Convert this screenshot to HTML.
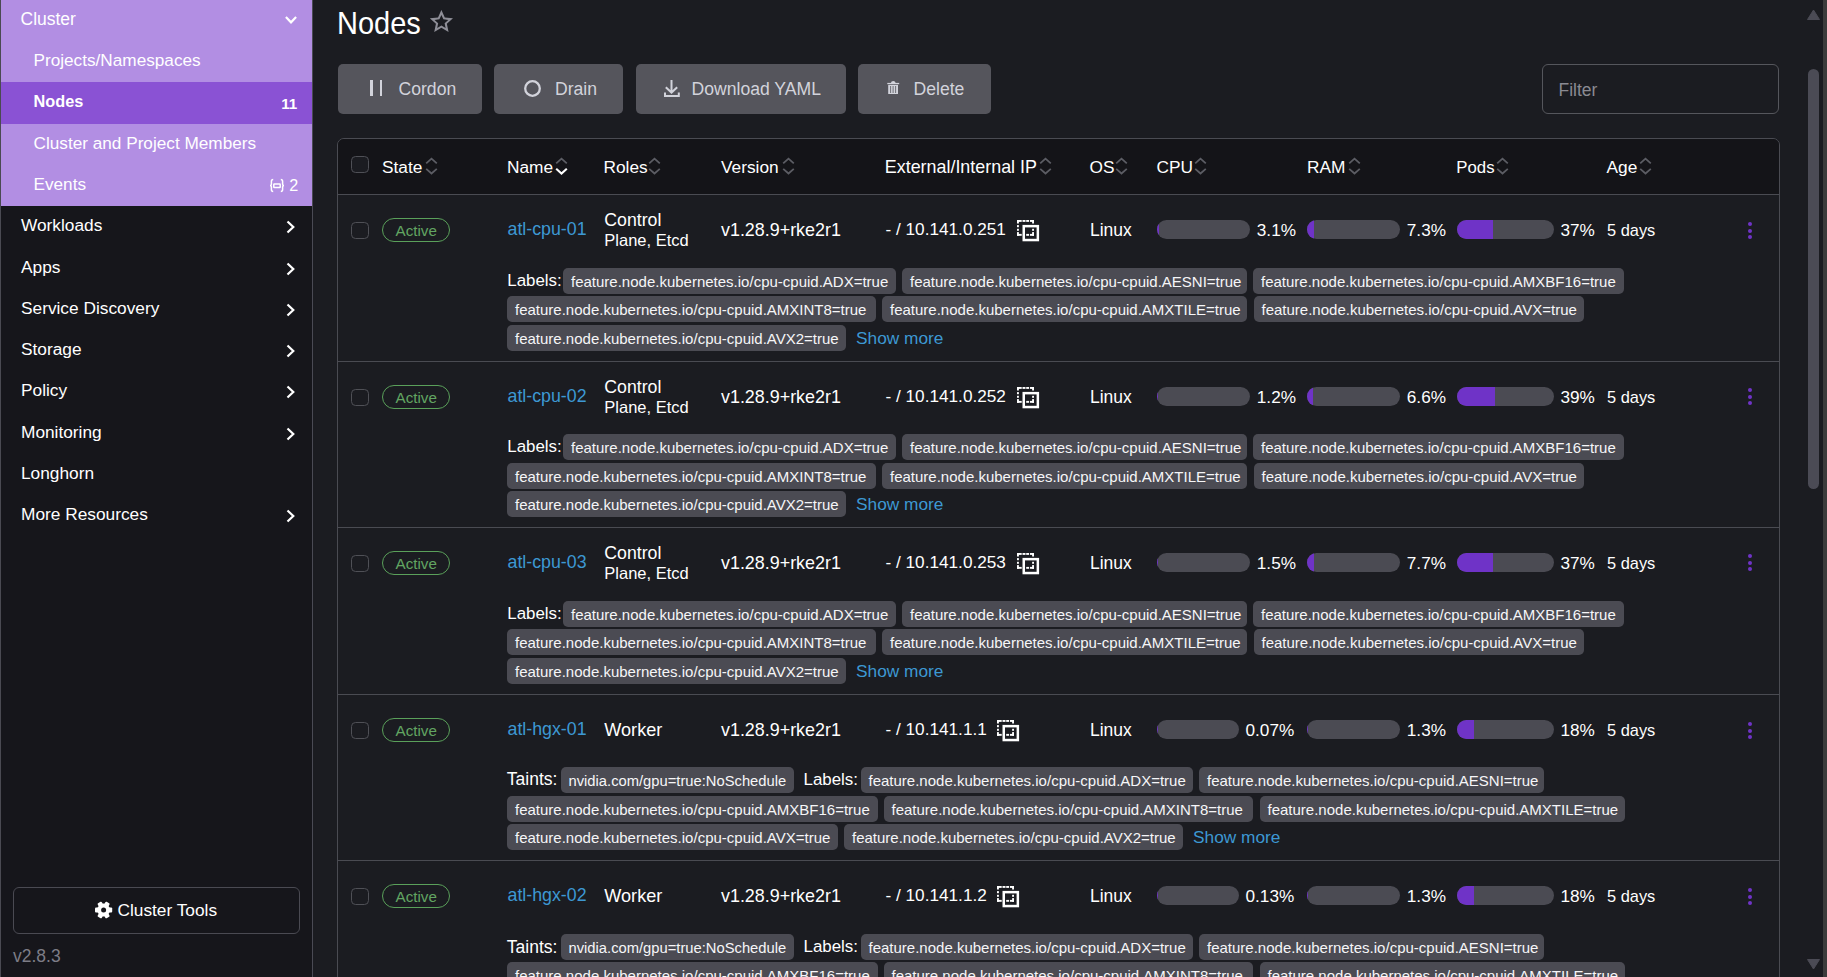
<!DOCTYPE html>
<html><head><meta charset="utf-8"><title>Nodes</title>
<style>
html,body{margin:0;padding:0;width:1827px;height:977px;overflow:hidden;background:#1b1c21;font-family:"Liberation Sans",sans-serif;}
.t{position:absolute;white-space:nowrap;}
.b{position:absolute;display:block;}
.chip{position:absolute;height:25.6px;line-height:28.4px;background:#4b4b53;border-radius:5px;color:#f6f6f8;font-size:15px;padding-left:8px;box-sizing:border-box;white-space:nowrap;overflow:hidden;}
.bar{position:absolute;height:19px;background:#4b4b53;border-radius:10px;overflow:hidden;}
.bar i{display:block;height:100%;background:#6f33c7;}
</style></head><body>
<div class="b" style="left:0px;top:0px;width:312px;height:977px;background:#16161b"></div>
<div class="b" style="left:0px;top:0px;width:312px;height:206px;background:#b28ee3"></div>
<div class="b" style="left:0px;top:82px;width:312px;height:41.5px;background:#8a52d4"></div>
<div class="b" style="left:0px;top:0px;width:1px;height:977px;background:#4a4a52"></div>
<div class="b" style="left:312px;top:0px;width:1px;height:977px;background:#4a4a54"></div>
<div class="t" style="left:20.5px;top:8.04px;font-size:17.5px;line-height:23px;color:#ffffff;font-weight:normal;">Cluster</div>
<svg class="b" style="left:284px;top:14px" width="14" height="12" viewBox="0 0 14 12"><path d="M1.9 3 L7 8.3 L12.1 3" fill="none" stroke="#fff" stroke-width="2.2"/></svg>
<div class="t" style="left:33.5px;top:49.34px;font-size:17.2px;line-height:22px;color:#ffffff;font-weight:normal;">Projects/Namespaces</div>
<div class="t" style="left:33.5px;top:91.45px;font-size:16.3px;line-height:21px;color:#ffffff;font-weight:bold;">Nodes</div>
<div class="t" style="left:33.5px;top:131.84px;font-size:17.2px;line-height:22px;color:#ffffff;font-weight:normal;">Cluster and Project Members</div>
<div class="t" style="left:33.5px;top:173.04px;font-size:17.2px;line-height:22px;color:#ffffff;font-weight:normal;">Events</div>
<div class="t" style="left:281.2px;top:94.33px;font-size:15.2px;line-height:20px;color:#ffffff;font-weight:bold;">11</div>
<svg class="b" style="left:268px;top:177px" width="18" height="17" viewBox="0 0 18 17"><path d="M5.2 2.6 Q3.4 2.6 3.4 4.6 L3.4 7.2 Q3.4 8.5 2 8.5 Q3.4 8.5 3.4 9.8 L3.4 12.6 Q3.4 14.6 5.2 14.6 M12.8 2.6 Q14.6 2.6 14.6 4.6 L14.6 7.2 Q14.6 8.5 16 8.5 Q14.6 8.5 14.6 9.8 L14.6 12.6 Q14.6 14.6 12.8 14.6" fill="none" stroke="#fff" stroke-width="1.5"/><rect x="5.8" y="6.9" width="6.4" height="3.6" rx="0.6" fill="none" stroke="#fff" stroke-width="1.5"/></svg>
<div class="t" style="left:289.3px;top:175.09px;font-size:16.2px;line-height:21px;color:#ffffff;font-weight:normal;">2</div>
<div class="t" style="left:21px;top:214.31px;font-size:17.3px;line-height:22px;color:#ffffff;font-weight:normal;">Workloads</div>
<svg class="b" style="left:285px;top:220.3px" width="10" height="14" viewBox="0 0 10 14"><path d="M2.5 1.5 L8.3 7 L2.5 12.5" fill="none" stroke="#fff" stroke-width="2.2"/></svg>
<div class="t" style="left:21px;top:255.56px;font-size:17.3px;line-height:22px;color:#ffffff;font-weight:normal;">Apps</div>
<svg class="b" style="left:285px;top:261.55px" width="10" height="14" viewBox="0 0 10 14"><path d="M2.5 1.5 L8.3 7 L2.5 12.5" fill="none" stroke="#fff" stroke-width="2.2"/></svg>
<div class="t" style="left:21px;top:296.81px;font-size:17.3px;line-height:22px;color:#ffffff;font-weight:normal;">Service Discovery</div>
<svg class="b" style="left:285px;top:302.8px" width="10" height="14" viewBox="0 0 10 14"><path d="M2.5 1.5 L8.3 7 L2.5 12.5" fill="none" stroke="#fff" stroke-width="2.2"/></svg>
<div class="t" style="left:21px;top:338.06px;font-size:17.3px;line-height:22px;color:#ffffff;font-weight:normal;">Storage</div>
<svg class="b" style="left:285px;top:344.05px" width="10" height="14" viewBox="0 0 10 14"><path d="M2.5 1.5 L8.3 7 L2.5 12.5" fill="none" stroke="#fff" stroke-width="2.2"/></svg>
<div class="t" style="left:21px;top:379.31px;font-size:17.3px;line-height:22px;color:#ffffff;font-weight:normal;">Policy</div>
<svg class="b" style="left:285px;top:385.3px" width="10" height="14" viewBox="0 0 10 14"><path d="M2.5 1.5 L8.3 7 L2.5 12.5" fill="none" stroke="#fff" stroke-width="2.2"/></svg>
<div class="t" style="left:21px;top:420.56px;font-size:17.3px;line-height:22px;color:#ffffff;font-weight:normal;">Monitoring</div>
<svg class="b" style="left:285px;top:426.55px" width="10" height="14" viewBox="0 0 10 14"><path d="M2.5 1.5 L8.3 7 L2.5 12.5" fill="none" stroke="#fff" stroke-width="2.2"/></svg>
<div class="t" style="left:21px;top:461.81px;font-size:17.3px;line-height:22px;color:#ffffff;font-weight:normal;">Longhorn</div>
<div class="t" style="left:21px;top:503.06px;font-size:17.3px;line-height:22px;color:#ffffff;font-weight:normal;">More Resources</div>
<svg class="b" style="left:285px;top:509.04999999999995px" width="10" height="14" viewBox="0 0 10 14"><path d="M2.5 1.5 L8.3 7 L2.5 12.5" fill="none" stroke="#fff" stroke-width="2.2"/></svg>
<div class="b" style="left:13px;top:887px;width:287px;height:46.5px;border:1px solid #4a4a52;border-radius:6px;box-sizing:border-box"></div>
<svg class="b" style="left:94px;top:901px" width="19" height="19" viewBox="0 0 19 19"><g transform="translate(9.6,9)" fill="#fff"><circle r="6.4"/><rect x="-2.4" y="-8.6" width="4.8" height="5" rx="1" transform="rotate(30)"/><rect x="-2.4" y="-8.6" width="4.8" height="5" rx="1" transform="rotate(90)"/><rect x="-2.4" y="-8.6" width="4.8" height="5" rx="1" transform="rotate(150)"/><rect x="-2.4" y="-8.6" width="4.8" height="5" rx="1" transform="rotate(210)"/><rect x="-2.4" y="-8.6" width="4.8" height="5" rx="1" transform="rotate(270)"/><rect x="-2.4" y="-8.6" width="4.8" height="5" rx="1" transform="rotate(330)"/></g><circle cx="9.6" cy="9" r="2.5" fill="#16161b"/></svg>
<div class="t" style="left:117.5px;top:899.01px;font-size:17.3px;line-height:22px;color:#ffffff;font-weight:normal;">Cluster Tools</div>
<div class="t" style="left:13px;top:944.94px;font-size:17.5px;line-height:23px;color:#7d7d86;font-weight:normal;">v2.8.3</div>
<div class="t" style="left:337.3px;top:2.59px;font-size:31.5px;line-height:41px;color:#ffffff;font-weight:normal;transform:scaleX(0.92);transform-origin:0 0;">Nodes</div>
<svg class="b" style="left:430px;top:10px" width="23" height="25" viewBox="0 0 23 25"><path d="M11.40 -0.10 L14.77 7.46 L23.00 8.33 L16.85 13.87 L18.57 21.97 L11.40 17.83 L4.23 21.97 L5.95 13.87 L-0.20 8.33 L8.03 7.46 Z M11.40 4.90 L13.39 9.36 L18.25 9.88 L14.62 13.15 L15.63 17.92 L11.40 15.48 L7.17 17.92 L8.18 13.15 L4.55 9.88 L9.41 9.36 Z" fill="#8e8e97" fill-rule="evenodd"/></svg>
<div class="b" style="left:338px;top:64px;width:144px;height:50px;background:#55555c;border-radius:5px"></div>
<div class="t" style="left:398.5px;top:77.70px;font-size:17.6px;line-height:23px;color:#d2d3db;font-weight:normal;">Cordon</div>
<div class="b" style="left:494px;top:64px;width:129px;height:50px;background:#55555c;border-radius:5px"></div>
<div class="t" style="left:555px;top:77.70px;font-size:17.6px;line-height:23px;color:#d2d3db;font-weight:normal;">Drain</div>
<div class="b" style="left:636px;top:64px;width:210px;height:50px;background:#55555c;border-radius:5px"></div>
<div class="t" style="left:691.5px;top:77.70px;font-size:17.6px;line-height:23px;color:#d2d3db;font-weight:normal;">Download YAML</div>
<div class="b" style="left:858px;top:64px;width:133px;height:50px;background:#55555c;border-radius:5px"></div>
<div class="t" style="left:913.5px;top:77.70px;font-size:17.6px;line-height:23px;color:#d2d3db;font-weight:normal;">Delete</div>
<div class="b" style="left:370px;top:80px;width:2.5px;height:16px;background:#d2d3db"></div>
<div class="b" style="left:379.5px;top:80px;width:2.5px;height:16px;background:#d2d3db"></div>
<svg class="b" style="left:523px;top:79px" width="19" height="19" viewBox="0 0 19 19"><circle cx="9.5" cy="9.5" r="7.3" fill="none" stroke="#d2d3db" stroke-width="2.3"/></svg>
<svg class="b" style="left:662px;top:78px" width="18" height="20" viewBox="0 0 18 20"><path d="M9.5 1.9 V14 M3.8 9.3 L9.5 14.6 L15.2 9.3 M3 14.6 V18 H16.8 V14.6" fill="none" stroke="#d2d3db" stroke-width="2"/></svg>
<svg class="b" style="left:886px;top:80px" width="14" height="16" viewBox="0 0 14 16"><rect x="1.3" y="2.9" width="11.9" height="1.3" fill="#d2d3db"/><path d="M4.9 2.9 Q5.2 0.9 7.25 0.9 Q9.3 0.9 9.6 2.9 Z" fill="#d2d3db"/><rect x="2.2" y="4.9" width="9.8" height="9.1" fill="#d2d3db"/><path d="M4.6 6 V13 M7.1 6 V13 M9.6 6 V13" stroke="#55555c" stroke-width="0.8"/></svg>
<div class="b" style="left:1542px;top:64px;width:237px;height:50px;border:1px solid #55565c;border-radius:6px;box-sizing:border-box"></div>
<div class="t" style="left:1558.5px;top:78.94px;font-size:17.5px;line-height:23px;color:#8a8a92;font-weight:normal;">Filter</div>
<div class="b" style="left:1823px;top:0px;width:4px;height:977px;background:#3c3c3c"></div>
<div class="b" style="left:1808px;top:68.5px;width:11px;height:420px;background:#4b4b55;border-radius:6px"></div>
<svg class="b" style="left:1807px;top:9px" width="13" height="11" viewBox="0 0 13 11"><path d="M6.5 1 L12.5 10.5 H0.5 Z" fill="#4b4b55" stroke="#4b4b55" stroke-linejoin="round" stroke-width="1"/></svg>
<svg class="b" style="left:1807px;top:959px" width="13" height="11" viewBox="0 0 13 11"><path d="M6.5 10 L12.5 0.5 H0.5 Z" fill="#4b4b55" stroke="#4b4b55" stroke-linejoin="round" stroke-width="1"/></svg>
<div class="b" style="left:337px;top:138px;width:1443px;height:900px;border:1px solid #4a4b52;border-radius:7px;box-sizing:border-box"></div>
<div class="b" style="left:338px;top:139px;width:1441px;height:55px;background:#141418;border-radius:6px 6px 0 0"></div>
<div class="b" style="left:337px;top:194px;width:1443px;height:1px;background:#4a4b52"></div>
<div class="b" style="left:351px;top:156px;width:18px;height:17px;background:#1b1c21;border:1.3px solid #4f5056;border-radius:4.5px;box-sizing:border-box"></div>
<div class="t" style="left:382px;top:156.31px;font-size:17.3px;line-height:22px;color:#ffffff;font-weight:normal;">State</div>
<svg class="b" style="left:424.8px;top:157px" width="13" height="19" viewBox="0 0 13 19"><path d="M1.2 6.4 L6.5 1.6 L11.8 6.4" fill="none" stroke="#5c5d64" stroke-width="1.8"/><path d="M1.2 11.8 L6.5 16.5 L11.8 11.8" fill="none" stroke="#5c5d64" stroke-width="1.8"/></svg>
<div class="t" style="left:507px;top:156.31px;font-size:17.3px;line-height:22px;color:#ffffff;font-weight:normal;">Name</div>
<svg class="b" style="left:554.8px;top:157px" width="13" height="19" viewBox="0 0 13 19"><path d="M1.2 6.4 L6.5 1.6 L11.8 6.4" fill="none" stroke="#5c5d64" stroke-width="1.8"/><path d="M1.2 11.8 L6.5 16.5 L11.8 11.8" fill="none" stroke="#ffffff" stroke-width="2.1"/></svg>
<div class="t" style="left:603.5px;top:156.31px;font-size:17.3px;line-height:22px;color:#ffffff;font-weight:normal;">Roles</div>
<svg class="b" style="left:648.3px;top:157px" width="13" height="19" viewBox="0 0 13 19"><path d="M1.2 6.4 L6.5 1.6 L11.8 6.4" fill="none" stroke="#5c5d64" stroke-width="1.8"/><path d="M1.2 11.8 L6.5 16.5 L11.8 11.8" fill="none" stroke="#5c5d64" stroke-width="1.8"/></svg>
<div class="t" style="left:721px;top:156.31px;font-size:17.3px;line-height:22px;color:#ffffff;font-weight:normal;">Version</div>
<svg class="b" style="left:782.3px;top:157px" width="13" height="19" viewBox="0 0 13 19"><path d="M1.2 6.4 L6.5 1.6 L11.8 6.4" fill="none" stroke="#5c5d64" stroke-width="1.8"/><path d="M1.2 11.8 L6.5 16.5 L11.8 11.8" fill="none" stroke="#5c5d64" stroke-width="1.8"/></svg>
<div class="t" style="left:884.8px;top:155.60px;font-size:17.9px;line-height:23px;color:#ffffff;font-weight:normal;">External/Internal IP</div>
<svg class="b" style="left:1038.8px;top:157px" width="13" height="19" viewBox="0 0 13 19"><path d="M1.2 6.4 L6.5 1.6 L11.8 6.4" fill="none" stroke="#5c5d64" stroke-width="1.8"/><path d="M1.2 11.8 L6.5 16.5 L11.8 11.8" fill="none" stroke="#5c5d64" stroke-width="1.8"/></svg>
<div class="t" style="left:1089.5px;top:156.31px;font-size:17.3px;line-height:22px;color:#ffffff;font-weight:normal;">OS</div>
<svg class="b" style="left:1114.8px;top:157px" width="13" height="19" viewBox="0 0 13 19"><path d="M1.2 6.4 L6.5 1.6 L11.8 6.4" fill="none" stroke="#5c5d64" stroke-width="1.8"/><path d="M1.2 11.8 L6.5 16.5 L11.8 11.8" fill="none" stroke="#5c5d64" stroke-width="1.8"/></svg>
<div class="t" style="left:1156.5px;top:156.31px;font-size:17.3px;line-height:22px;color:#ffffff;font-weight:normal;">CPU</div>
<svg class="b" style="left:1194.3px;top:157px" width="13" height="19" viewBox="0 0 13 19"><path d="M1.2 6.4 L6.5 1.6 L11.8 6.4" fill="none" stroke="#5c5d64" stroke-width="1.8"/><path d="M1.2 11.8 L6.5 16.5 L11.8 11.8" fill="none" stroke="#5c5d64" stroke-width="1.8"/></svg>
<div class="t" style="left:1307px;top:156.31px;font-size:17.3px;line-height:22px;color:#ffffff;font-weight:normal;">RAM</div>
<svg class="b" style="left:1347.8px;top:157px" width="13" height="19" viewBox="0 0 13 19"><path d="M1.2 6.4 L6.5 1.6 L11.8 6.4" fill="none" stroke="#5c5d64" stroke-width="1.8"/><path d="M1.2 11.8 L6.5 16.5 L11.8 11.8" fill="none" stroke="#5c5d64" stroke-width="1.8"/></svg>
<div class="t" style="left:1456.3px;top:157.28px;font-size:16.8px;line-height:22px;color:#ffffff;font-weight:normal;">Pods</div>
<svg class="b" style="left:1495.8px;top:157px" width="13" height="19" viewBox="0 0 13 19"><path d="M1.2 6.4 L6.5 1.6 L11.8 6.4" fill="none" stroke="#5c5d64" stroke-width="1.8"/><path d="M1.2 11.8 L6.5 16.5 L11.8 11.8" fill="none" stroke="#5c5d64" stroke-width="1.8"/></svg>
<div class="t" style="left:1606.5px;top:156.31px;font-size:17.3px;line-height:22px;color:#ffffff;font-weight:normal;">Age</div>
<svg class="b" style="left:1638.8px;top:157px" width="13" height="19" viewBox="0 0 13 19"><path d="M1.2 6.4 L6.5 1.6 L11.8 6.4" fill="none" stroke="#5c5d64" stroke-width="1.8"/><path d="M1.2 11.8 L6.5 16.5 L11.8 11.8" fill="none" stroke="#5c5d64" stroke-width="1.8"/></svg>
<div class="b" style="left:351px;top:222px;width:18px;height:17px;background:#1b1c21;border:1.3px solid #4f5056;border-radius:4.5px;box-sizing:border-box"></div>
<div class="b" style="left:382px;top:218px;width:68px;height:23.5px;border:1.3px solid #5aa05a;border-radius:12px;box-sizing:border-box"></div>
<div class="t" style="left:395.5px;top:221.43px;font-size:15.2px;line-height:20px;color:#62a562;font-weight:normal;">Active</div>
<div class="t" style="left:507.5px;top:218.33px;font-size:17.8px;line-height:23px;color:#3d98d3;font-weight:normal;">atl-cpu-01</div>
<div class="t" style="left:604.3px;top:208.87px;font-size:17.7px;line-height:23px;color:#ffffff;font-weight:normal;">Control</div>
<div class="t" style="left:604.3px;top:229.78px;font-size:16.5px;line-height:21px;color:#ffffff;font-weight:normal;">Plane, Etcd</div>
<div class="t" style="left:721px;top:218.80px;font-size:17.9px;line-height:23px;color:#ffffff;font-weight:normal;">v1.28.9+rke2r1</div>
<div class="t" style="left:885.5px;top:217.74px;font-size:17.2px;line-height:22px;color:#ffffff;font-weight:normal;">- / 10.141.0.251</div>
<svg class="b" style="left:1017px;top:220px" width="23" height="22" viewBox="0 0 23 22"><g fill="#fff"><rect x="0" y="0" width="4.7" height="1.9"/><rect x="0" y="0" width="1.9" height="3.5"/><rect x="5.5" y="0" width="3" height="1.9"/><rect x="9.2" y="0" width="2.9" height="1.9"/><rect x="13" y="0" width="4" height="1.9"/><rect x="15.1" y="0" width="1.9" height="3.5"/><rect x="0" y="5.1" width="1.9" height="2.1"/><rect x="0" y="8.8" width="1.9" height="2"/><rect x="0" y="12.1" width="1.9" height="3.7"/><rect x="0" y="13.9" width="4.7" height="1.9"/><rect x="15.1" y="8.8" width="1.9" height="2"/><rect x="15.1" y="12.1" width="1.9" height="3.7"/><rect x="13" y="13.9" width="4" height="1.9"/><rect x="9.2" y="13.9" width="2.9" height="1.9"/></g><rect x="6.75" y="6.15" width="14.1" height="13.9" fill="none" stroke="#fff" stroke-width="2.5"/></svg>
<div class="t" style="left:1090px;top:218.94px;font-size:17.5px;line-height:23px;color:#ffffff;font-weight:normal;">Linux</div>
<div class="bar" style="left:1156.5px;top:220.00px;width:93.3px"><i style="width:2.9px"></i></div>
<div class="t" style="left:1256.8px;top:218.84px;font-size:17.2px;line-height:22px;color:#ffffff;font-weight:normal;">3.1%</div>
<div class="bar" style="left:1307px;top:220.00px;width:92.8px"><i style="width:6.8px"></i></div>
<div class="t" style="left:1406.8px;top:218.84px;font-size:17.2px;line-height:22px;color:#ffffff;font-weight:normal;">7.3%</div>
<div class="bar" style="left:1457px;top:220.00px;width:96.5px"><i style="width:35.7px"></i></div>
<div class="t" style="left:1560.5px;top:218.84px;font-size:17.2px;line-height:22px;color:#ffffff;font-weight:normal;">37%</div>
<div class="t" style="left:1607px;top:219.62px;font-size:16.4px;line-height:21px;color:#ffffff;font-weight:normal;">5 days</div>
<div class="b" style="left:1747.5px;top:222.0px;width:4px;height:4px;background:#6f33c7;border-radius:2px"></div>
<div class="b" style="left:1747.5px;top:228.5px;width:4px;height:4px;background:#6f33c7;border-radius:2px"></div>
<div class="b" style="left:1747.5px;top:235.0px;width:4px;height:4px;background:#6f33c7;border-radius:2px"></div>
<div class="t" style="left:507.3px;top:270.24px;font-size:16.9px;line-height:22px;color:#ffffff;font-weight:normal;">Labels:</div>
<div class="chip" style="left:563px;top:268px;width:333px;font-size:15px">feature.node.kubernetes.io/cpu-cpuid.ADX=true</div>
<div class="chip" style="left:902px;top:268px;width:345px;font-size:15px">feature.node.kubernetes.io/cpu-cpuid.AESNI=true</div>
<div class="chip" style="left:1253px;top:268px;width:370.5px;font-size:15px">feature.node.kubernetes.io/cpu-cpuid.AMXBF16=true</div>
<div class="chip" style="left:507px;top:296px;width:369px;font-size:15px">feature.node.kubernetes.io/cpu-cpuid.AMXINT8=true</div>
<div class="chip" style="left:882px;top:296px;width:365px;font-size:15px">feature.node.kubernetes.io/cpu-cpuid.AMXTILE=true</div>
<div class="chip" style="left:1253.5px;top:296px;width:330.5px;font-size:15px">feature.node.kubernetes.io/cpu-cpuid.AVX=true</div>
<div class="chip" style="left:507px;top:325px;width:339px;font-size:15px">feature.node.kubernetes.io/cpu-cpuid.AVX2=true</div>
<div class="t" style="left:856px;top:327.01px;font-size:17.3px;line-height:22px;color:#3d98d3;font-weight:normal;">Show more</div>
<div class="b" style="left:338px;top:361px;width:1441px;height:1px;background:#4a4b52"></div>
<div class="b" style="left:351px;top:389px;width:18px;height:17px;background:#1b1c21;border:1.3px solid #4f5056;border-radius:4.5px;box-sizing:border-box"></div>
<div class="b" style="left:382px;top:385px;width:68px;height:23.5px;border:1.3px solid #5aa05a;border-radius:12px;box-sizing:border-box"></div>
<div class="t" style="left:395.5px;top:388.43px;font-size:15.2px;line-height:20px;color:#62a562;font-weight:normal;">Active</div>
<div class="t" style="left:507.5px;top:385.33px;font-size:17.8px;line-height:23px;color:#3d98d3;font-weight:normal;">atl-cpu-02</div>
<div class="t" style="left:604.3px;top:375.87px;font-size:17.7px;line-height:23px;color:#ffffff;font-weight:normal;">Control</div>
<div class="t" style="left:604.3px;top:396.78px;font-size:16.5px;line-height:21px;color:#ffffff;font-weight:normal;">Plane, Etcd</div>
<div class="t" style="left:721px;top:385.80px;font-size:17.9px;line-height:23px;color:#ffffff;font-weight:normal;">v1.28.9+rke2r1</div>
<div class="t" style="left:885.5px;top:384.74px;font-size:17.2px;line-height:22px;color:#ffffff;font-weight:normal;">- / 10.141.0.252</div>
<svg class="b" style="left:1017px;top:387px" width="23" height="22" viewBox="0 0 23 22"><g fill="#fff"><rect x="0" y="0" width="4.7" height="1.9"/><rect x="0" y="0" width="1.9" height="3.5"/><rect x="5.5" y="0" width="3" height="1.9"/><rect x="9.2" y="0" width="2.9" height="1.9"/><rect x="13" y="0" width="4" height="1.9"/><rect x="15.1" y="0" width="1.9" height="3.5"/><rect x="0" y="5.1" width="1.9" height="2.1"/><rect x="0" y="8.8" width="1.9" height="2"/><rect x="0" y="12.1" width="1.9" height="3.7"/><rect x="0" y="13.9" width="4.7" height="1.9"/><rect x="15.1" y="8.8" width="1.9" height="2"/><rect x="15.1" y="12.1" width="1.9" height="3.7"/><rect x="13" y="13.9" width="4" height="1.9"/><rect x="9.2" y="13.9" width="2.9" height="1.9"/></g><rect x="6.75" y="6.15" width="14.1" height="13.9" fill="none" stroke="#fff" stroke-width="2.5"/></svg>
<div class="t" style="left:1090px;top:385.94px;font-size:17.5px;line-height:23px;color:#ffffff;font-weight:normal;">Linux</div>
<div class="bar" style="left:1156.5px;top:387.00px;width:93.3px"><i style="width:1.1px"></i></div>
<div class="t" style="left:1256.8px;top:385.84px;font-size:17.2px;line-height:22px;color:#ffffff;font-weight:normal;">1.2%</div>
<div class="bar" style="left:1307px;top:387.00px;width:92.8px"><i style="width:6.1px"></i></div>
<div class="t" style="left:1406.8px;top:385.84px;font-size:17.2px;line-height:22px;color:#ffffff;font-weight:normal;">6.6%</div>
<div class="bar" style="left:1457px;top:387.00px;width:96.5px"><i style="width:37.6px"></i></div>
<div class="t" style="left:1560.5px;top:385.84px;font-size:17.2px;line-height:22px;color:#ffffff;font-weight:normal;">39%</div>
<div class="t" style="left:1607px;top:386.62px;font-size:16.4px;line-height:21px;color:#ffffff;font-weight:normal;">5 days</div>
<div class="b" style="left:1747.5px;top:388.0px;width:4px;height:4px;background:#6f33c7;border-radius:2px"></div>
<div class="b" style="left:1747.5px;top:394.5px;width:4px;height:4px;background:#6f33c7;border-radius:2px"></div>
<div class="b" style="left:1747.5px;top:401.0px;width:4px;height:4px;background:#6f33c7;border-radius:2px"></div>
<div class="t" style="left:507.3px;top:436.04px;font-size:16.9px;line-height:22px;color:#ffffff;font-weight:normal;">Labels:</div>
<div class="chip" style="left:563px;top:434.2px;width:333px;font-size:15px">feature.node.kubernetes.io/cpu-cpuid.ADX=true</div>
<div class="chip" style="left:902px;top:434.2px;width:345px;font-size:15px">feature.node.kubernetes.io/cpu-cpuid.AESNI=true</div>
<div class="chip" style="left:1253px;top:434.2px;width:370.5px;font-size:15px">feature.node.kubernetes.io/cpu-cpuid.AMXBF16=true</div>
<div class="chip" style="left:507px;top:463px;width:369px;font-size:15px">feature.node.kubernetes.io/cpu-cpuid.AMXINT8=true</div>
<div class="chip" style="left:882px;top:463px;width:365px;font-size:15px">feature.node.kubernetes.io/cpu-cpuid.AMXTILE=true</div>
<div class="chip" style="left:1253.5px;top:463px;width:330.5px;font-size:15px">feature.node.kubernetes.io/cpu-cpuid.AVX=true</div>
<div class="chip" style="left:507px;top:491.2px;width:339px;font-size:15px">feature.node.kubernetes.io/cpu-cpuid.AVX2=true</div>
<div class="t" style="left:856px;top:493.21px;font-size:17.3px;line-height:22px;color:#3d98d3;font-weight:normal;">Show more</div>
<div class="b" style="left:338px;top:527px;width:1441px;height:1px;background:#4a4b52"></div>
<div class="b" style="left:351px;top:555px;width:18px;height:17px;background:#1b1c21;border:1.3px solid #4f5056;border-radius:4.5px;box-sizing:border-box"></div>
<div class="b" style="left:382px;top:551px;width:68px;height:23.5px;border:1.3px solid #5aa05a;border-radius:12px;box-sizing:border-box"></div>
<div class="t" style="left:395.5px;top:554.43px;font-size:15.2px;line-height:20px;color:#62a562;font-weight:normal;">Active</div>
<div class="t" style="left:507.5px;top:551.33px;font-size:17.8px;line-height:23px;color:#3d98d3;font-weight:normal;">atl-cpu-03</div>
<div class="t" style="left:604.3px;top:541.87px;font-size:17.7px;line-height:23px;color:#ffffff;font-weight:normal;">Control</div>
<div class="t" style="left:604.3px;top:562.78px;font-size:16.5px;line-height:21px;color:#ffffff;font-weight:normal;">Plane, Etcd</div>
<div class="t" style="left:721px;top:551.80px;font-size:17.9px;line-height:23px;color:#ffffff;font-weight:normal;">v1.28.9+rke2r1</div>
<div class="t" style="left:885.5px;top:550.74px;font-size:17.2px;line-height:22px;color:#ffffff;font-weight:normal;">- / 10.141.0.253</div>
<svg class="b" style="left:1017px;top:553px" width="23" height="22" viewBox="0 0 23 22"><g fill="#fff"><rect x="0" y="0" width="4.7" height="1.9"/><rect x="0" y="0" width="1.9" height="3.5"/><rect x="5.5" y="0" width="3" height="1.9"/><rect x="9.2" y="0" width="2.9" height="1.9"/><rect x="13" y="0" width="4" height="1.9"/><rect x="15.1" y="0" width="1.9" height="3.5"/><rect x="0" y="5.1" width="1.9" height="2.1"/><rect x="0" y="8.8" width="1.9" height="2"/><rect x="0" y="12.1" width="1.9" height="3.7"/><rect x="0" y="13.9" width="4.7" height="1.9"/><rect x="15.1" y="8.8" width="1.9" height="2"/><rect x="15.1" y="12.1" width="1.9" height="3.7"/><rect x="13" y="13.9" width="4" height="1.9"/><rect x="9.2" y="13.9" width="2.9" height="1.9"/></g><rect x="6.75" y="6.15" width="14.1" height="13.9" fill="none" stroke="#fff" stroke-width="2.5"/></svg>
<div class="t" style="left:1090px;top:551.94px;font-size:17.5px;line-height:23px;color:#ffffff;font-weight:normal;">Linux</div>
<div class="bar" style="left:1156.5px;top:553.00px;width:93.3px"><i style="width:1.4px"></i></div>
<div class="t" style="left:1256.8px;top:551.84px;font-size:17.2px;line-height:22px;color:#ffffff;font-weight:normal;">1.5%</div>
<div class="bar" style="left:1307px;top:553.00px;width:92.8px"><i style="width:7.1px"></i></div>
<div class="t" style="left:1406.8px;top:551.84px;font-size:17.2px;line-height:22px;color:#ffffff;font-weight:normal;">7.7%</div>
<div class="bar" style="left:1457px;top:553.00px;width:96.5px"><i style="width:35.7px"></i></div>
<div class="t" style="left:1560.5px;top:551.84px;font-size:17.2px;line-height:22px;color:#ffffff;font-weight:normal;">37%</div>
<div class="t" style="left:1607px;top:552.62px;font-size:16.4px;line-height:21px;color:#ffffff;font-weight:normal;">5 days</div>
<div class="b" style="left:1747.5px;top:554.0px;width:4px;height:4px;background:#6f33c7;border-radius:2px"></div>
<div class="b" style="left:1747.5px;top:560.5px;width:4px;height:4px;background:#6f33c7;border-radius:2px"></div>
<div class="b" style="left:1747.5px;top:567.0px;width:4px;height:4px;background:#6f33c7;border-radius:2px"></div>
<div class="t" style="left:507.3px;top:603.24px;font-size:16.9px;line-height:22px;color:#ffffff;font-weight:normal;">Labels:</div>
<div class="chip" style="left:563px;top:601px;width:333px;font-size:15px">feature.node.kubernetes.io/cpu-cpuid.ADX=true</div>
<div class="chip" style="left:902px;top:601px;width:345px;font-size:15px">feature.node.kubernetes.io/cpu-cpuid.AESNI=true</div>
<div class="chip" style="left:1253px;top:601px;width:370.5px;font-size:15px">feature.node.kubernetes.io/cpu-cpuid.AMXBF16=true</div>
<div class="chip" style="left:507px;top:629px;width:369px;font-size:15px">feature.node.kubernetes.io/cpu-cpuid.AMXINT8=true</div>
<div class="chip" style="left:882px;top:629px;width:365px;font-size:15px">feature.node.kubernetes.io/cpu-cpuid.AMXTILE=true</div>
<div class="chip" style="left:1253.5px;top:629px;width:330.5px;font-size:15px">feature.node.kubernetes.io/cpu-cpuid.AVX=true</div>
<div class="chip" style="left:507px;top:658px;width:339px;font-size:15px">feature.node.kubernetes.io/cpu-cpuid.AVX2=true</div>
<div class="t" style="left:856px;top:660.01px;font-size:17.3px;line-height:22px;color:#3d98d3;font-weight:normal;">Show more</div>
<div class="b" style="left:338px;top:694px;width:1441px;height:1px;background:#4a4b52"></div>
<div class="b" style="left:351px;top:722px;width:18px;height:17px;background:#1b1c21;border:1.3px solid #4f5056;border-radius:4.5px;box-sizing:border-box"></div>
<div class="b" style="left:382px;top:718px;width:68px;height:23.5px;border:1.3px solid #5aa05a;border-radius:12px;box-sizing:border-box"></div>
<div class="t" style="left:395.5px;top:721.43px;font-size:15.2px;line-height:20px;color:#62a562;font-weight:normal;">Active</div>
<div class="t" style="left:507.5px;top:718.33px;font-size:17.8px;line-height:23px;color:#3d98d3;font-weight:normal;">atl-hgx-01</div>
<div class="t" style="left:604.3px;top:718.43px;font-size:18.1px;line-height:24px;color:#ffffff;font-weight:normal;">Worker</div>
<div class="t" style="left:721px;top:718.80px;font-size:17.9px;line-height:23px;color:#ffffff;font-weight:normal;">v1.28.9+rke2r1</div>
<div class="t" style="left:885.5px;top:717.74px;font-size:17.2px;line-height:22px;color:#ffffff;font-weight:normal;">- / 10.141.1.1</div>
<svg class="b" style="left:997px;top:720px" width="23" height="22" viewBox="0 0 23 22"><g fill="#fff"><rect x="0" y="0" width="4.7" height="1.9"/><rect x="0" y="0" width="1.9" height="3.5"/><rect x="5.5" y="0" width="3" height="1.9"/><rect x="9.2" y="0" width="2.9" height="1.9"/><rect x="13" y="0" width="4" height="1.9"/><rect x="15.1" y="0" width="1.9" height="3.5"/><rect x="0" y="5.1" width="1.9" height="2.1"/><rect x="0" y="8.8" width="1.9" height="2"/><rect x="0" y="12.1" width="1.9" height="3.7"/><rect x="0" y="13.9" width="4.7" height="1.9"/><rect x="15.1" y="8.8" width="1.9" height="2"/><rect x="15.1" y="12.1" width="1.9" height="3.7"/><rect x="13" y="13.9" width="4" height="1.9"/><rect x="9.2" y="13.9" width="2.9" height="1.9"/></g><rect x="6.75" y="6.15" width="14.1" height="13.9" fill="none" stroke="#fff" stroke-width="2.5"/></svg>
<div class="t" style="left:1090px;top:718.94px;font-size:17.5px;line-height:23px;color:#ffffff;font-weight:normal;">Linux</div>
<div class="bar" style="left:1156.5px;top:720.00px;width:82.0px"><i style="width:0.1px"></i></div>
<div class="t" style="left:1245.5px;top:718.84px;font-size:17.2px;line-height:22px;color:#ffffff;font-weight:normal;">0.07%</div>
<div class="bar" style="left:1307px;top:720.00px;width:92.8px"><i style="width:1.2px"></i></div>
<div class="t" style="left:1406.8px;top:718.84px;font-size:17.2px;line-height:22px;color:#ffffff;font-weight:normal;">1.3%</div>
<div class="bar" style="left:1457px;top:720.00px;width:96.5px"><i style="width:17.4px"></i></div>
<div class="t" style="left:1560.5px;top:718.84px;font-size:17.2px;line-height:22px;color:#ffffff;font-weight:normal;">18%</div>
<div class="t" style="left:1607px;top:719.62px;font-size:16.4px;line-height:21px;color:#ffffff;font-weight:normal;">5 days</div>
<div class="b" style="left:1747.5px;top:722.0px;width:4px;height:4px;background:#6f33c7;border-radius:2px"></div>
<div class="b" style="left:1747.5px;top:728.5px;width:4px;height:4px;background:#6f33c7;border-radius:2px"></div>
<div class="b" style="left:1747.5px;top:735.0px;width:4px;height:4px;background:#6f33c7;border-radius:2px"></div>
<div class="t" style="left:506.8px;top:768.34px;font-size:17.5px;line-height:23px;color:#ffffff;font-weight:normal;">Taints:</div>
<div class="chip" style="left:560.5px;top:767.2px;width:233.5px;font-size:14.75px">nvidia.com/gpu=true:NoSchedule</div>
<div class="t" style="left:803.5px;top:769.04px;font-size:16.9px;line-height:22px;color:#ffffff;font-weight:normal;">Labels:</div>
<div class="chip" style="left:860.5px;top:767.2px;width:332px;font-size:15px">feature.node.kubernetes.io/cpu-cpuid.ADX=true</div>
<div class="chip" style="left:1199px;top:767.2px;width:344.5px;font-size:15px">feature.node.kubernetes.io/cpu-cpuid.AESNI=true</div>
<div class="chip" style="left:507px;top:796px;width:370.5px;font-size:15px">feature.node.kubernetes.io/cpu-cpuid.AMXBF16=true</div>
<div class="chip" style="left:883.5px;top:796px;width:369px;font-size:15px">feature.node.kubernetes.io/cpu-cpuid.AMXINT8=true</div>
<div class="chip" style="left:1259.5px;top:796px;width:365px;font-size:15px">feature.node.kubernetes.io/cpu-cpuid.AMXTILE=true</div>
<div class="chip" style="left:507px;top:824.2px;width:331px;font-size:15px">feature.node.kubernetes.io/cpu-cpuid.AVX=true</div>
<div class="chip" style="left:844px;top:824.2px;width:338.5px;font-size:15px">feature.node.kubernetes.io/cpu-cpuid.AVX2=true</div>
<div class="t" style="left:1193px;top:826.21px;font-size:17.3px;line-height:22px;color:#3d98d3;font-weight:normal;">Show more</div>
<div class="b" style="left:338px;top:860px;width:1441px;height:1px;background:#4a4b52"></div>
<div class="b" style="left:351px;top:888px;width:18px;height:17px;background:#1b1c21;border:1.3px solid #4f5056;border-radius:4.5px;box-sizing:border-box"></div>
<div class="b" style="left:382px;top:884px;width:68px;height:23.5px;border:1.3px solid #5aa05a;border-radius:12px;box-sizing:border-box"></div>
<div class="t" style="left:395.5px;top:887.43px;font-size:15.2px;line-height:20px;color:#62a562;font-weight:normal;">Active</div>
<div class="t" style="left:507.5px;top:884.33px;font-size:17.8px;line-height:23px;color:#3d98d3;font-weight:normal;">atl-hgx-02</div>
<div class="t" style="left:604.3px;top:884.43px;font-size:18.1px;line-height:24px;color:#ffffff;font-weight:normal;">Worker</div>
<div class="t" style="left:721px;top:884.80px;font-size:17.9px;line-height:23px;color:#ffffff;font-weight:normal;">v1.28.9+rke2r1</div>
<div class="t" style="left:885.5px;top:883.74px;font-size:17.2px;line-height:22px;color:#ffffff;font-weight:normal;">- / 10.141.1.2</div>
<svg class="b" style="left:997px;top:886px" width="23" height="22" viewBox="0 0 23 22"><g fill="#fff"><rect x="0" y="0" width="4.7" height="1.9"/><rect x="0" y="0" width="1.9" height="3.5"/><rect x="5.5" y="0" width="3" height="1.9"/><rect x="9.2" y="0" width="2.9" height="1.9"/><rect x="13" y="0" width="4" height="1.9"/><rect x="15.1" y="0" width="1.9" height="3.5"/><rect x="0" y="5.1" width="1.9" height="2.1"/><rect x="0" y="8.8" width="1.9" height="2"/><rect x="0" y="12.1" width="1.9" height="3.7"/><rect x="0" y="13.9" width="4.7" height="1.9"/><rect x="15.1" y="8.8" width="1.9" height="2"/><rect x="15.1" y="12.1" width="1.9" height="3.7"/><rect x="13" y="13.9" width="4" height="1.9"/><rect x="9.2" y="13.9" width="2.9" height="1.9"/></g><rect x="6.75" y="6.15" width="14.1" height="13.9" fill="none" stroke="#fff" stroke-width="2.5"/></svg>
<div class="t" style="left:1090px;top:884.94px;font-size:17.5px;line-height:23px;color:#ffffff;font-weight:normal;">Linux</div>
<div class="bar" style="left:1156.5px;top:886.00px;width:82.0px"><i style="width:0.1px"></i></div>
<div class="t" style="left:1245.5px;top:884.84px;font-size:17.2px;line-height:22px;color:#ffffff;font-weight:normal;">0.13%</div>
<div class="bar" style="left:1307px;top:886.00px;width:92.8px"><i style="width:1.2px"></i></div>
<div class="t" style="left:1406.8px;top:884.84px;font-size:17.2px;line-height:22px;color:#ffffff;font-weight:normal;">1.3%</div>
<div class="bar" style="left:1457px;top:886.00px;width:96.5px"><i style="width:17.4px"></i></div>
<div class="t" style="left:1560.5px;top:884.84px;font-size:17.2px;line-height:22px;color:#ffffff;font-weight:normal;">18%</div>
<div class="t" style="left:1607px;top:885.62px;font-size:16.4px;line-height:21px;color:#ffffff;font-weight:normal;">5 days</div>
<div class="b" style="left:1747.5px;top:888.0px;width:4px;height:4px;background:#6f33c7;border-radius:2px"></div>
<div class="b" style="left:1747.5px;top:894.5px;width:4px;height:4px;background:#6f33c7;border-radius:2px"></div>
<div class="b" style="left:1747.5px;top:901.0px;width:4px;height:4px;background:#6f33c7;border-radius:2px"></div>
<div class="t" style="left:506.8px;top:935.54px;font-size:17.5px;line-height:23px;color:#ffffff;font-weight:normal;">Taints:</div>
<div class="chip" style="left:560.5px;top:934px;width:233.5px;font-size:14.75px">nvidia.com/gpu=true:NoSchedule</div>
<div class="t" style="left:803.5px;top:936.24px;font-size:16.9px;line-height:22px;color:#ffffff;font-weight:normal;">Labels:</div>
<div class="chip" style="left:860.5px;top:934px;width:332px;font-size:15px">feature.node.kubernetes.io/cpu-cpuid.ADX=true</div>
<div class="chip" style="left:1199px;top:934px;width:344.5px;font-size:15px">feature.node.kubernetes.io/cpu-cpuid.AESNI=true</div>
<div class="chip" style="left:507px;top:962px;width:370.5px;font-size:15px">feature.node.kubernetes.io/cpu-cpuid.AMXBF16=true</div>
<div class="chip" style="left:883.5px;top:962px;width:369px;font-size:15px">feature.node.kubernetes.io/cpu-cpuid.AMXINT8=true</div>
<div class="chip" style="left:1259.5px;top:962px;width:365px;font-size:15px">feature.node.kubernetes.io/cpu-cpuid.AMXTILE=true</div>
<div class="chip" style="left:507px;top:991px;width:331px;font-size:15px">feature.node.kubernetes.io/cpu-cpuid.AVX=true</div>
<div class="chip" style="left:844px;top:991px;width:338.5px;font-size:15px">feature.node.kubernetes.io/cpu-cpuid.AVX2=true</div>
<div class="t" style="left:1193px;top:993.01px;font-size:17.3px;line-height:22px;color:#3d98d3;font-weight:normal;">Show more</div>
</body></html>
